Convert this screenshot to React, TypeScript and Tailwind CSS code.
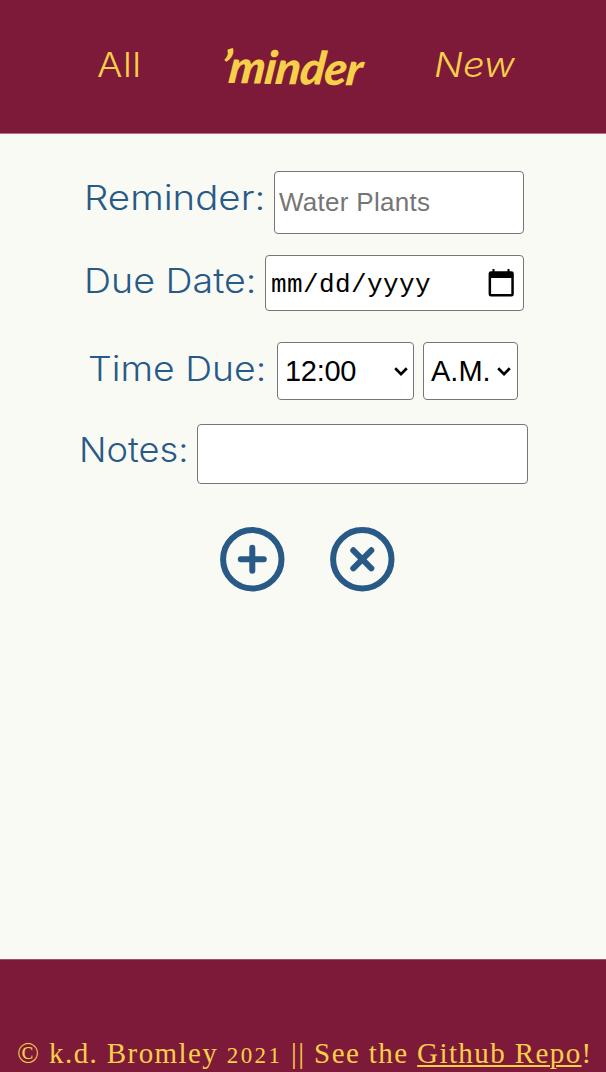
import React from "react";

const labelClass =
  "block shrink-0 origin-left whitespace-nowrap font-['Inter','Liberation_Sans',sans-serif] text-[34px] font-[350] leading-[40px] text-[#285a87]";
const boxClass =
  "shrink-0 rounded-[4px] border border-[#767676] bg-white font-['Liberation_Sans',sans-serif] outline-none";

function Chevron({ className }: { className: string }) {
  return (
    <svg className={className} viewBox="0 0 14 9" fill="none" aria-hidden="true">
      <path d="M1.2 1.3 7 7.1l5.8-5.8" stroke="#000" strokeWidth="2.7" />
    </svg>
  );
}

function CalendarIcon() {
  return (
    <svg className="h-[28px] w-[26px]" viewBox="0 0 26 28" aria-hidden="true">
      <path
        fillRule="evenodd"
        d="M4.500 0H6.500v2.200h13V0h2v2.200h1.900A2.400 2.400 0 0 1 25.800 4.600v20.600a2.400 2.400 0 0 1-2.400 2.400H3A2.400 2.400 0 0 1 .6 25.200V4.600A2.400 2.400 0 0 1 3 2.200h1.500zM3.100 9v16.100h20.200V9z"
      />
    </svg>
  );
}

function CircleButton({ label, d }: { label: string; d: string }) {
  return (
    <button type="button" aria-label={label} className="h-[65px] w-[65px]">
      <svg
        viewBox="0 0 65 65"
        className="h-full w-full"
        fill="none"
        stroke="#285a87"
        strokeWidth="6"
        strokeLinecap="round"
      >
        <circle cx="32.300" cy="32.300" r="29.200" />
        <path d={d} />
      </svg>
    </button>
  );
}

export default function App() {
  return (
    <div className="flex h-[1072px] w-[606px] flex-col overflow-hidden bg-[#fafaf5]">
      <header className="flex h-[134px] shrink-0 items-start border-b border-[#b9708a] bg-[#7e1a39] pl-[97px] text-[#f8cf49]">
        <a className="mt-[45px] w-[124px] origin-left scale-x-[1.11] font-['Inter','Liberation_Sans',sans-serif] text-[34px] font-light leading-[40px] tracking-[0.5px]">
          All
        </a>
        <h1 className="mt-[39px] w-[213px] origin-left rotate-1 -skew-x-6 whitespace-nowrap font-['Lato',sans-serif] text-[46px] font-black italic leading-[54px] tracking-[-0.700px]">
          ’minder
        </h1>
        <a className="mt-[45px] origin-left scale-x-[1.12] font-['Inter','Liberation_Sans',sans-serif] text-[34px] font-light italic leading-[40px]">
          New
        </a>
      </header>

      <main className="flex grow flex-col pt-[37px]">
        <div className="flex h-[84px] items-start pl-[84px]">
          <label className={`${labelClass} mt-[7px] w-[190px] scale-x-[1.13]`}>Reminder:</label>
          <input
            className={`${boxClass} h-[63px] w-[250px] pl-[4px] text-[26px] tracking-[0.280px] placeholder:text-[#757575] placeholder:opacity-100`}
            placeholder="Water Plants"
          />
        </div>
        <div className="flex h-[87px] items-start pl-[84px]">
          <label className={`${labelClass} mt-[6px] w-[181px] scale-x-[1.105]`}>Due Date:</label>
          <div className={`${boxClass} flex h-[56px] w-[259px] items-center justify-between pl-[5px] pr-[9px]`}>
            <span className="pt-[4px] font-['Liberation_Mono',monospace] text-[26px] leading-[30px] tracking-[0.400px]">
              mm/dd/yyyy
            </span>
            <CalendarIcon />
          </div>
        </div>
        <div className="flex h-[82px] items-start pl-[88px]">
          <label className={`${labelClass} mt-[7px] w-[189px] scale-x-[1.098]`}>Time Due:</label>
          <div className="relative mr-[9px]">
            <select className={`${boxClass} block h-[58px] w-[137px] appearance-none pl-[7px] pt-[2px] text-[29px] tracking-[-0.300px]`}>
              <option>12:00</option>
            </select>
            <Chevron className="pointer-events-none absolute right-[6px] top-[25px] h-[9px] w-[14px]" />
          </div>
          <div className="relative">
            <select className={`${boxClass} block h-[58px] w-[95px] appearance-none pl-[7px] pt-[2px] text-[29px]`}>
              <option>A.M.</option>
            </select>
            <Chevron className="pointer-events-none absolute right-[7px] top-[25px] h-[9px] w-[14px]" />
          </div>
        </div>
        <div className="flex h-[103px] items-start pl-[79px]">
          <label className={`${labelClass} mt-[6px] w-[118px] scale-x-[1.065]`}>Notes:</label>
          <input aria-label="Notes" className={`${boxClass} h-[60px] w-[331px] px-[4px] text-[26px]`} />
        </div>
        <div className="flex gap-[44.5px] pl-[220.2px]">
          <CircleButton label="Add" d="M32.300 20.800v23M20.800 32.300h23" />
          <CircleButton label="Cancel" d="M23.300 23.300l18 18M41.300 23.300l-18 18" />
        </div>
      </main>

      <footer className="h-[113px] shrink-0 border-t border-[#a0526d] bg-[#7e1a39] pl-[17px] pt-[76px] text-[#f8cf49]">
        <p className="whitespace-nowrap font-['Liberation_Serif',serif] text-[29px] leading-[34px] tracking-[1.400px]">
          © k.d. Bromley <span className="text-[23px] tracking-[2.400px]">2021</span> || See the{" "}
          <a className="underline decoration-2 underline-offset-[2px]">Github Repo</a>!
        </p>
      </footer>
    </div>
  );
}
